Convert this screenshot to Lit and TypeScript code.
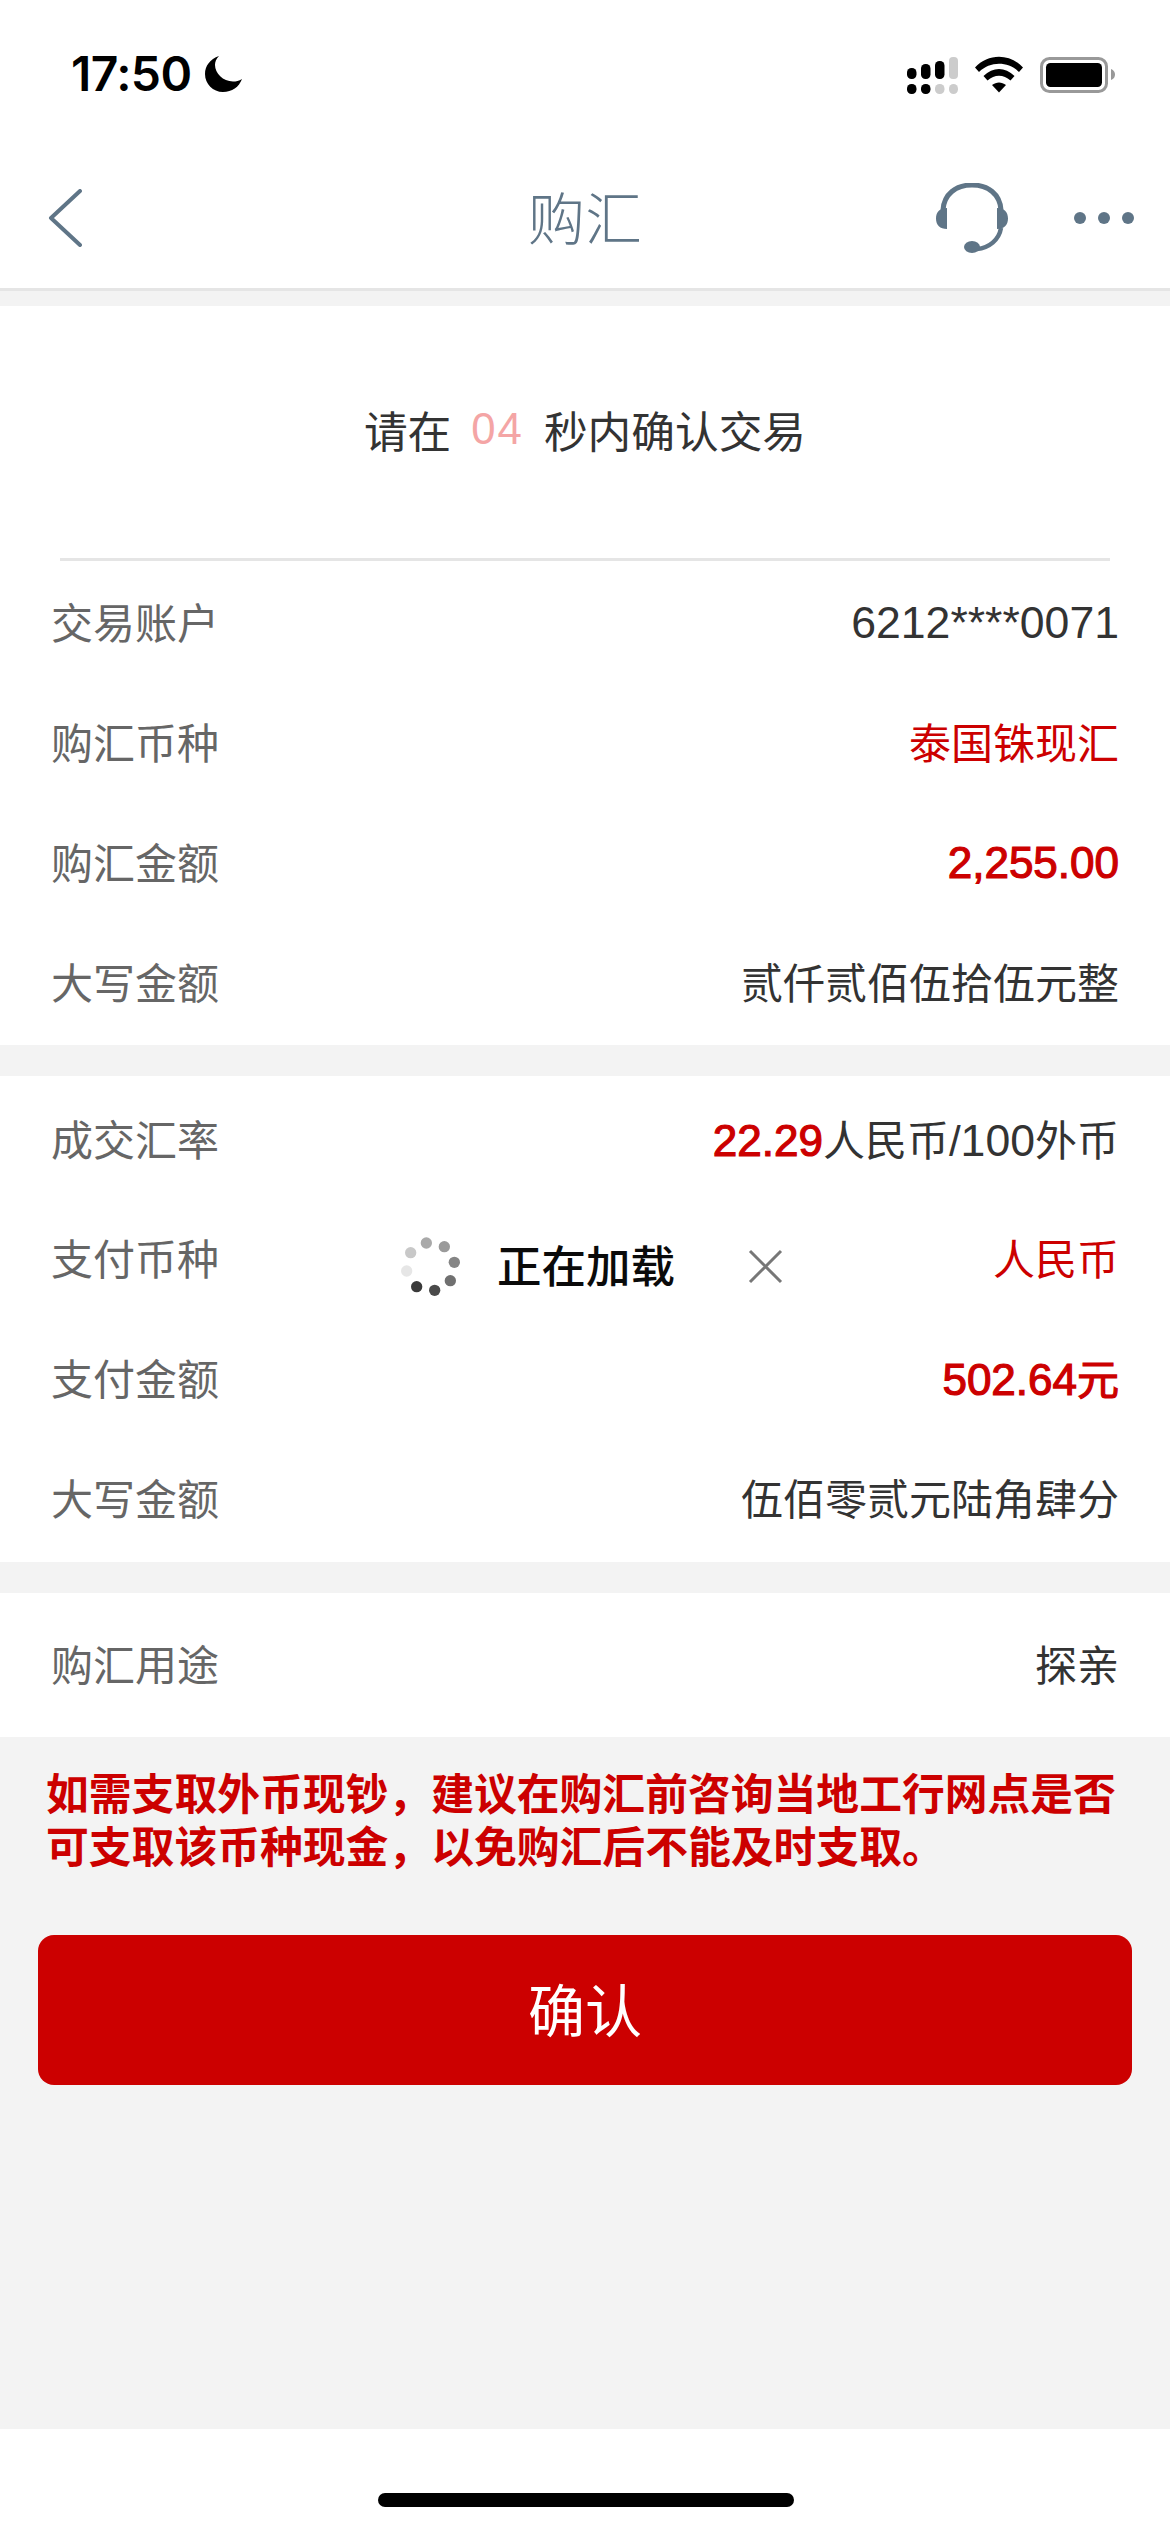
import { LitElement, css, html, svg } from 'lit';
import { customElement } from 'lit/decorators.js';

type Row = { label: string; value: unknown; tone?: 'red' | 'strong'; latin?: boolean };

const ACCOUNT_ROWS: Row[] = [
  { label: '交易账户', value: html`<span class="num">6212****0071</span>`, latin: true },
  { label: '购汇币种', value: '泰国铢现汇', tone: 'red' },
  { label: '购汇金额', value: html`<span class="num">2,255.00</span>`, tone: 'strong', latin: true },
  { label: '大写金额', value: '贰仟贰佰伍拾伍元整' },
];

const PAY_ROWS: Row[] = [
  { label: '成交汇率', value: html`<span class="rate num">22.29</span>人民币/<span class="num">100</span>外币` },
  { label: '支付币种', value: '人民币', tone: 'red' },
  { label: '支付金额', value: html`<span class="num">502.64</span>元`, tone: 'strong' },
  { label: '大写金额', value: '伍佰零贰元陆角肆分' },
];

// spinner dots, clockwise from the top, fading round the ring
const SPINNER = [
  [164, 126, '#a9a9a9'],
  [218, 137, '#9a9a9a'],
  [248, 184, '#858585'],
  [236, 239, '#707070'],
  [189, 268, '#4a4a4a'],
  [135, 257, '#3a3a3a'],
  [105, 210, '#e6e6e6'],
  [117, 155, '#c8c8c8'],
] as const;

@customElement('app-root')
export class AppRoot extends LitElement {
  static styles = css`
    :host {
      display: block;
      position: relative;
      width: 1170px;
      height: 2532px;
      overflow: hidden;
      background: #f3f3f3;
      color: #333;
      font-family: 'Liberation Sans', 'Noto Sans CJK SC', sans-serif;
    }
    .status {
      height: 100px;
      box-sizing: border-box;
      padding: 52px 55px 0 71px;
      background: #fff;
      display: flex;
      justify-content: space-between;
      align-items: flex-start;
    }
    .clock {
      display: flex;
      align-items: center;
      gap: 13px;
      height: 44px;
      font: 600 48px/44px Inter, sans-serif;
      letter-spacing: -0.6px;
      color: #000;
    }
    .sys {
      display: block;
      margin-top: 3px;
    }
    .nav {
      height: 191px;
      box-sizing: border-box;
      border-bottom: 3px solid #e5e5e5;
      background: #fff;
      padding: 48px 36px 0;
      display: grid;
      grid-template-columns: 1fr auto 1fr;
      align-items: center;
      color: #5f7587;
    }
    .nav h1 {
      margin: 0 0 6px;
      font-size: 57px;
      font-weight: 300;
      line-height: 64px;
      font-family: 'Noto Sans CJK SC', sans-serif;
    }
    .back {
      margin-left: 12px;
    }
    .nav-actions {
      display: flex;
      justify-content: flex-end;
      align-items: center;
      gap: 66px;
    }
    .nav svg {
      display: block;
    }
    .panel {
      background: #fff;
      margin-top: 31px;
    }
    .panel.first {
      margin-top: 15px;
      padding-bottom: 3px;
    }
    .panel.pay {
      padding-top: 4px;
      padding-bottom: 3px;
    }
    .countdown {
      height: 245px;
      padding-bottom: 7px;
      margin: 0 60px 2px;
      border-bottom: 3px solid #e5e5e5;
      display: flex;
      justify-content: center;
      align-items: center;
      font-size: 43.7px;
    }
    .countdown em {
      font-style: normal;
      color: #f4a5a5;
      margin: 0 20px;
      letter-spacing: 2px;
    }
    .row {
      height: 119.8px;
      box-sizing: border-box;
      padding: 0 51px 4px;
      display: flex;
      justify-content: space-between;
      align-items: center;
      font-size: 42px;
    }
    .pay .row,
    .row.solo {
      padding-bottom: 6px;
    }
    .row.solo {
      height: 144px;
    }
    .label {
      color: #666;
    }
    .value {
      color: #333;
    }
    .value.latin {
      margin-top: 5px;
    }
    .value.red {
      color: #c00;
    }
    .value.strong {
      color: #c00;
      -webkit-text-stroke: 1.2px #c00;
    }
    .num {
      font-size: 44.6px;
    }
    .strong .num,
    .rate {
      font-size: 44px;
    }
    .rate {
      color: #c00;
      -webkit-text-stroke: 1.2px #c00;
    }
    .notice {
      margin: 0;
      padding: 32px 46px 0 46px;
      color: #c00;
      font-size: 42.8px;
      line-height: 53px;
      font-weight: 700;
      white-space: nowrap;
    }
    .confirm {
      display: flex;
      justify-content: center;
      align-items: center;
      height: 150px;
      box-sizing: border-box;
      padding-bottom: 6px;
      margin: 60px 38px 0;
      border-radius: 16px;
      background: #c00;
      color: #fff;
      font-size: 57px;
      font-family: 'Noto Sans CJK SC', sans-serif;
      font-weight: 400;
    }
    .home {
      position: absolute;
      left: 0;
      right: 0;
      bottom: 0;
      height: 103px;
      background: #fff;
    }
    .home i {
      position: absolute;
      left: 378px;
      top: 64px;
      width: 416px;
      height: 14px;
      border-radius: 7px;
      background: #000;
    }
    .loading {
      position: absolute;
      left: 400px;
      top: 1226px;
      height: 80px;
      display: flex;
      align-items: center;
      font-size: 44.5px;
      font-weight: 500;
      color: #0a0a0a;
      font-family: 'Noto Sans CJK SC', sans-serif;
    }
    .loading .text {
      margin-left: 37px;
      padding-bottom: 6px;
      width: 177px;
      white-space: nowrap;
    }
    .loading .close {
      margin-left: 74px;
    }
  `;

  private renderRows(rows: Row[]) {
    return rows.map(
      (r) => html`<div class="row">
        <span class="label">${r.label}</span>
        <span class="value ${r.tone ?? ''} ${r.latin ? 'latin' : ''}">${r.value}</span>
      </div>`,
    );
  }

  private renderSystemIcons() {
    return html`<svg class="sys" width="210" height="40" viewBox="0 0 210 40">
      <g transform="translate(-905,-54)">
        <rect x="907" y="67" width="9.5" height="11" rx="4.5" fill="#000" />
        <rect x="921" y="63" width="9.5" height="15" rx="4.5" fill="#000" />
        <rect x="935" y="60" width="9.5" height="18" rx="4.5" fill="#000" />
        <rect x="949" y="56" width="9" height="22" rx="4" fill="#ccc" />
        <rect x="907" y="83" width="9.5" height="10" rx="4.5" fill="#000" />
        <rect x="921" y="83" width="9.5" height="10" rx="4.5" fill="#000" />
        <rect x="935" y="83" width="9.5" height="10" rx="4.5" fill="#ccc" />
        <rect x="949" y="83" width="9" height="10" rx="4.5" fill="#ccc" />
        <path d="M975 66.5C988 52 1010 52 1023 66.5L1019 71C1008 60 990 60 979 71Z" fill="#000" />
        <path d="M983.5 75C993 65.5 1005 65.5 1014.5 75L1010.5 79.5C1003.500 73 994.500 73 987.500 79.500Z" fill="#000" />
        <path d="M992 84C996.500 80.500 1001.500 80.500 1006 84L999 91.500Z" fill="#000" />
        <rect x="1041.500" y="57.500" width="65" height="33" rx="8" fill="none" stroke="#999" stroke-width="3" />
        <rect x="1046" y="62" width="56" height="24" rx="4.500" fill="#000" />
        <path d="M1111 68C1114 69 1115 71.500 1115 73.500S1114 78 1111 79Z" fill="#999" />
      </g>
    </svg>`;
  }

  render() {
    return html`
      <div class="status">
        <div class="clock">
          <span>17:50</span>
          <svg width="38" height="36" viewBox="0 0 38 36">
            <path d="M14 0C5 3 0 10 0 18c0 10 8 18 18 18 9 0 16-5 19-13-3 2-6 2.500-9 2.500C18 25.500 10 17 10 9c0-3 1-6 4-9Z" fill="#000" />
          </svg>
        </div>
        ${this.renderSystemIcons()}
      </div>

      <header class="nav">
        <svg class="back" width="34" height="58" viewBox="0 0 34 58">
          <path d="M32 2 3 29l29 27" fill="none" stroke="#5f7587" stroke-width="4" stroke-linecap="round" stroke-linejoin="round" />
        </svg>
        <h1>购汇</h1>
        <div class="nav-actions">
          <svg width="72" height="70" viewBox="0 0 72 70">
            <path d="M7 27C8 11 20 2 36 2s28 9 29 25" fill="none" stroke="#5f7587" stroke-width="5" />
            <path d="M11 25v21C4 46 0 42 0 35.500S4 25 11 25ZM61 25v21c7 0 11-4 11-10.500S68 25 61 25Z" fill="#5f7587" />
            <path d="M65 45c-2 12-12 20-24 21" fill="none" stroke="#5f7587" stroke-width="4.500" />
            <ellipse cx="36" cy="64" rx="8" ry="6" fill="#5f7587" />
          </svg>
          <svg width="60" height="12" viewBox="0 0 60 12">
            <circle cx="6" cy="6" r="6" fill="#5f7587" />
            <circle cx="30" cy="6" r="6" fill="#5f7587" />
            <circle cx="54" cy="6" r="6" fill="#5f7587" />
          </svg>
        </div>
      </header>

      <section class="panel first">
        <div class="countdown">请在<em>04</em>秒内确认交易</div>
        ${this.renderRows(ACCOUNT_ROWS)}
      </section>

      <section class="panel pay">${this.renderRows(PAY_ROWS)}</section>

      <section class="panel">
        <div class="row solo">
          <span class="label">购汇用途</span>
          <span class="value">探亲</span>
        </div>
      </section>

      <p class="notice">
        如需支取外币现钞，建议在购汇前咨询当地工行网点是否<br />可支取该币种现金，以免购汇后不能及时支取。
      </p>
      <div class="confirm">确认</div>

      <div class="home"><i></i></div>

      <div class="loading">
        <svg width="60" height="60" viewBox="85 105 180 180">
          ${SPINNER.map(([x, y, c]) => svg`<circle cx=${x} cy=${y} r="17" fill=${c} />`)}
        </svg>
        <span class="text">正在加载</span>
        <svg class="close" width="35" height="35" viewBox="0 0 35 35">
          <path d="M2 2l31 31M33 2 2 33" stroke="#777" stroke-width="3" fill="none" />
        </svg>
      </div>
    `;
  }
}

declare global {
  interface HTMLElementTagNameMap {
    'app-root': AppRoot;
  }
}
